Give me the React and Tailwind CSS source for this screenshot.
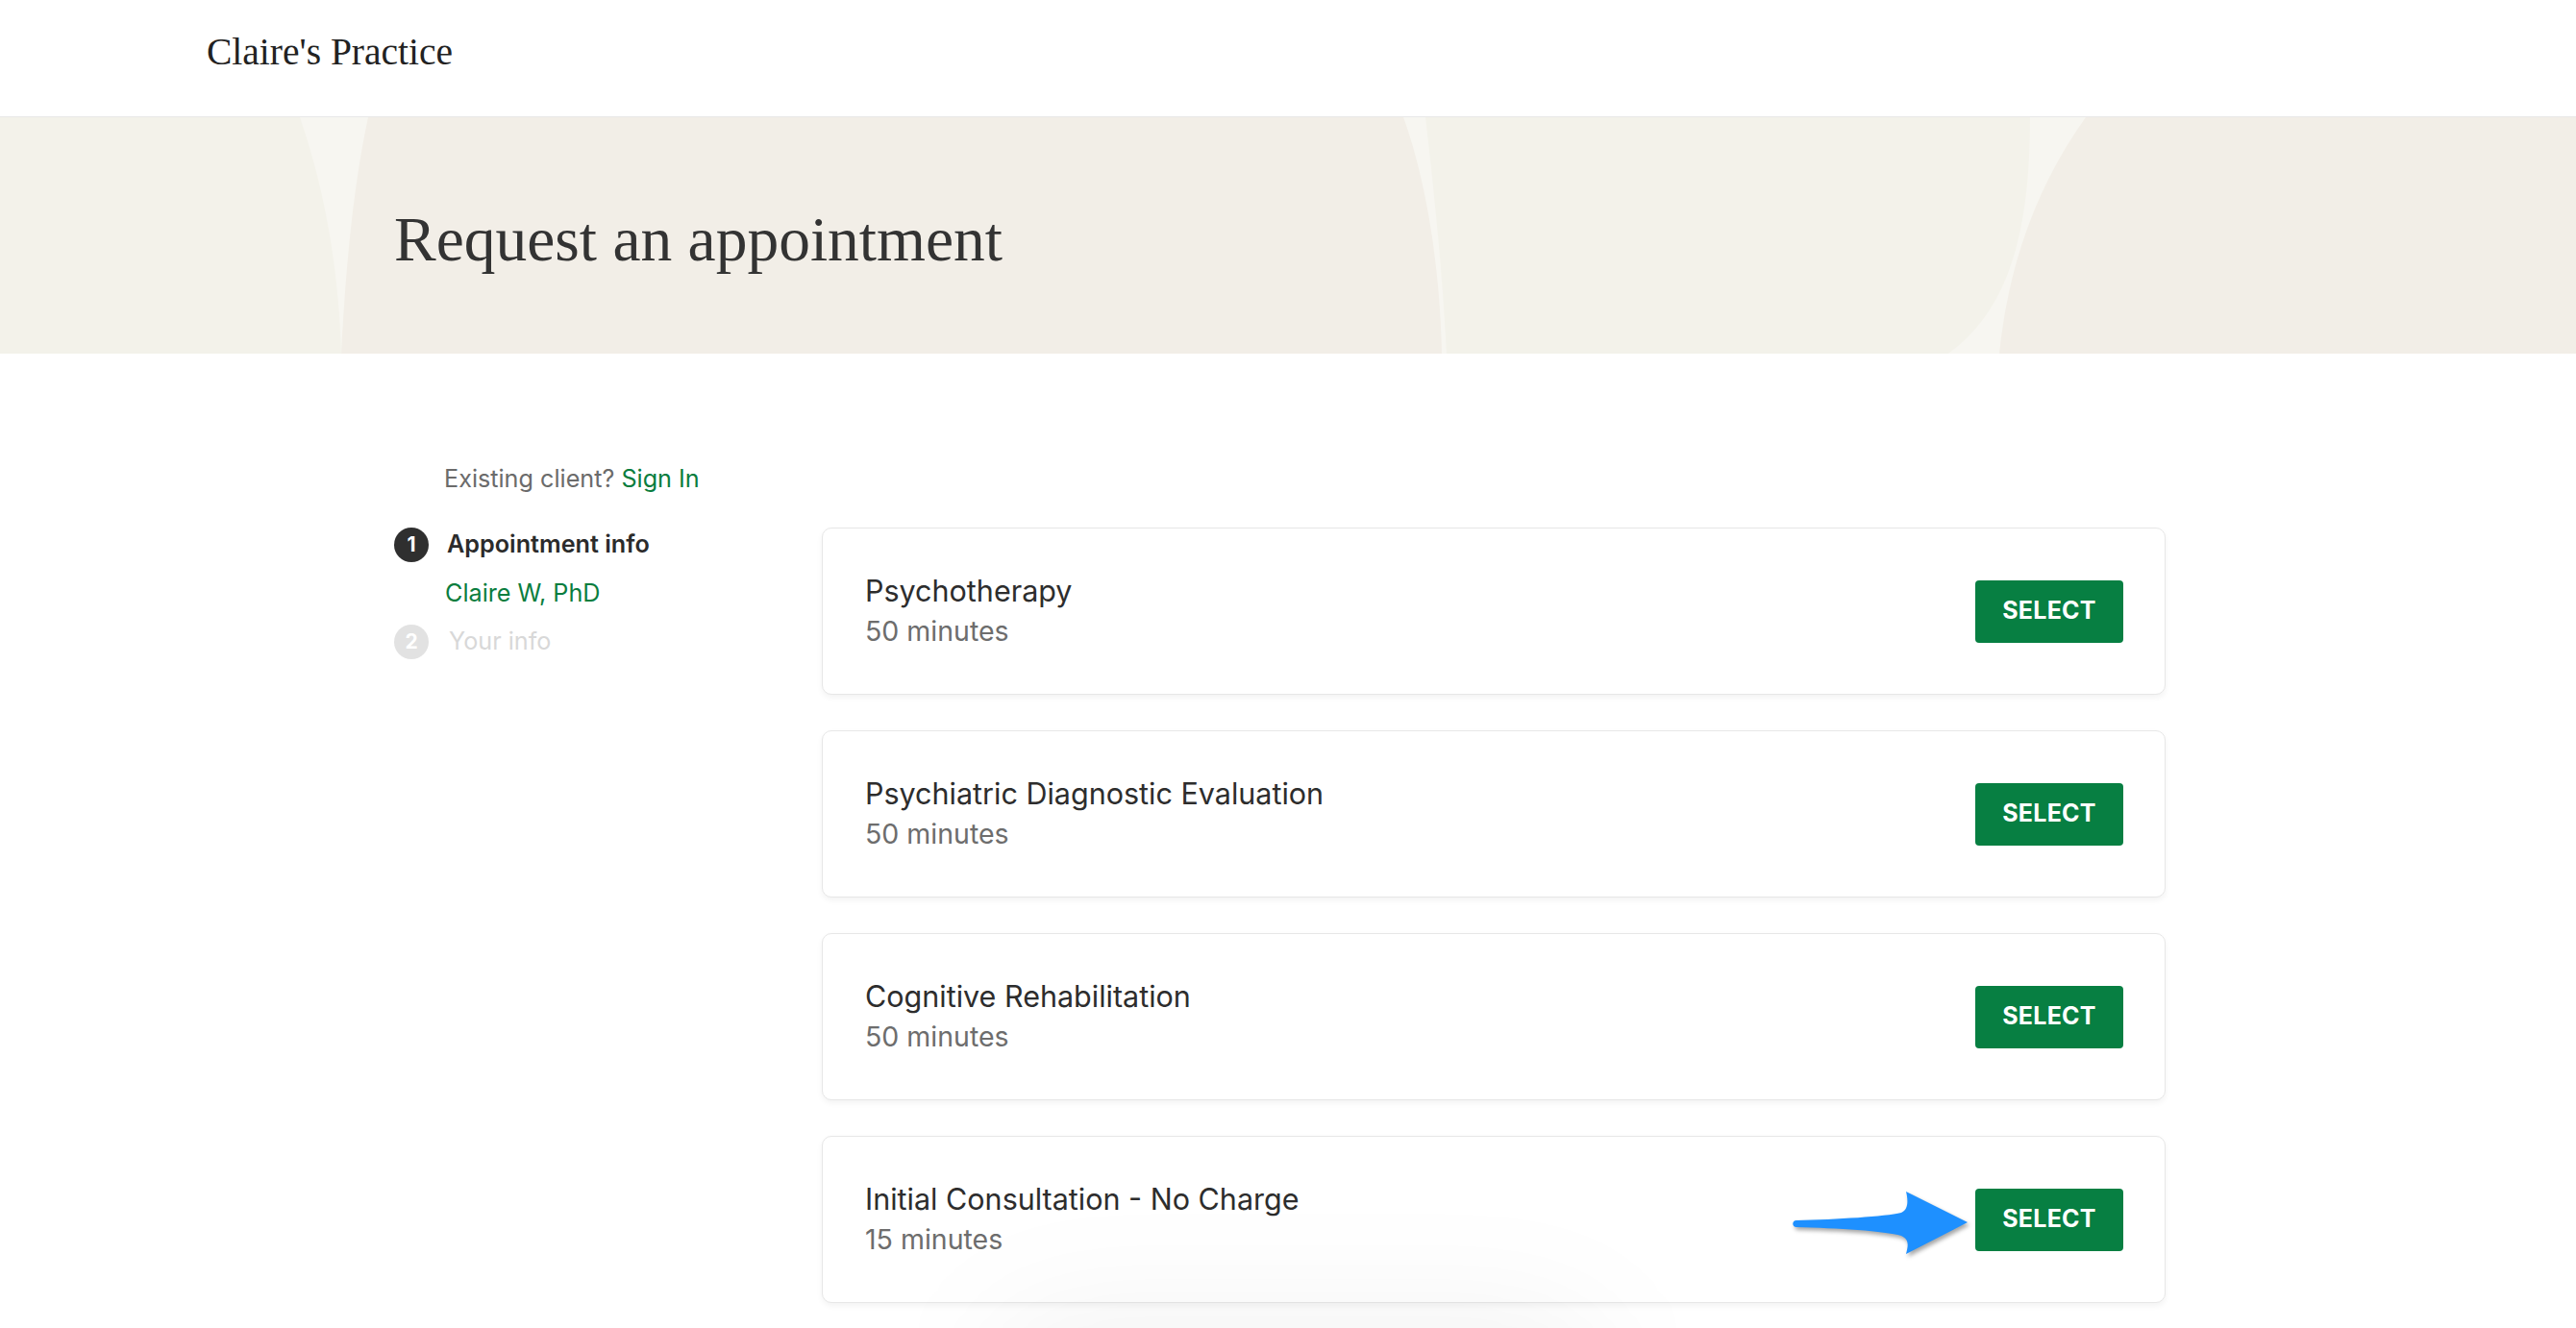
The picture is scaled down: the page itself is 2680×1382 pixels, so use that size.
import React from 'react';

const services = [
    { name: 'Psychotherapy', duration: '50 minutes' },
    { name: 'Psychiatric Diagnostic Evaluation', duration: '50 minutes' },
    { name: 'Cognitive Rehabilitation', duration: '50 minutes' },
    { name: 'Initial Consultation - No Charge', duration: '15 minutes', pointer: true },
];

function BannerShapes() {
    return (
        <svg className="absolute inset-0 h-full w-full" viewBox="0 0 2680 246" preserveAspectRatio="none">
            <rect width="2680" height="246" fill="#F7F6F1" />
            <path d="M0 0 L312 0 C336 70 352 150 355 246 L0 246 Z" fill="#F3F2EA" />
            <path d="M383 0 L1460 0 C1482 60 1498 150 1500 246 L355 246 C360 150 368 70 383 0 Z" fill="#F2EEE7" />
            <path d="M1483 0 L2112 0 C2112 120 2090 200 2027 246 L1505 246 C1500 150 1490 60 1483 0 Z" fill="#F3F2EA" />
            <path d="M2170 0 L2680 0 L2680 246 L2080 246 C2090 150 2120 70 2170 0 Z" fill="#F2EEE7" />
        </svg>
    );
}

function Arrow() {
    return (
        <svg
            className="absolute left-[1005px] top-[51px] h-[80px] w-[192px] drop-shadow-[2px_3px_2px_rgba(0,0,0,0.35)]"
            viewBox="0 0 192 80"
        >
            <path
                d="M8 36 C50 35 100 32 117 28 C125 25 124 14 122 6 L186 38 L122 71 C124 63 126 56 117 52 C100 47 50 44 8 43 C3 43 3 36 8 36 Z"
                fill="#1E90FF"
            />
        </svg>
    );
}

function ServiceCard({ name, duration, pointer }) {
    return (
        <div className="relative flex h-[174px] items-center justify-between rounded-[10px] border border-[#e7e7e7] bg-white pl-[44px] pr-[43px] shadow-[0_3px_6px_rgba(0,0,0,0.05)]">
            <div>
                <div className="text-[30.5px] leading-[42px] text-[#2d2d2d]">{name}</div>
                <div className="text-[28.5px] leading-[42px] text-[#6d6d6d]">{duration}</div>
            </div>
            {pointer && <Arrow />}
            <button className="flex h-[65px] w-[154px] items-center justify-center rounded-[4px] bg-[#077f42] text-[25px] font-bold tracking-[0.01em] text-white">
                SELECT
            </button>
        </div>
    );
}

export default function App() {
    return (
        <div className="relative h-[1382px] overflow-hidden bg-white font-['Inter',sans-serif]">
            <header className="h-[122px] border-b border-[#e8e8e8] pl-[215px] pt-[35px]">
                <span className="font-['Liberation_Serif',serif] text-[39.5px] leading-none text-[#222]">Claire's Practice</span>
            </header>

            <section className="relative h-[246px]">
                <BannerShapes />
                <h1 className="relative pl-[410px] pt-[95px] font-['Liberation_Serif',serif] text-[65.5px] leading-none text-[#333]">
                    Request an appointment
                </h1>
            </section>

            <div className="flex pl-[410px] pt-[110px]">
                <div className="w-[445px]">
                    <p className="pl-[52px] text-[25.2px] leading-[40px] text-[#6b6b6b]">
                        Existing client? <span className="text-[#0a7d3e]">Sign In</span>
                    </p>
                    <div className="mt-[29px] flex h-[40px] items-center gap-[19px]">
                        <span className="flex h-[36px] w-[36px] items-center justify-center rounded-full bg-[#2f2f2f] text-[21px] font-bold text-white">1</span>
                        <span className="text-[25.2px] font-semibold text-[#2b2b2b]">Appointment info</span>
                    </div>
                    <div className="mt-[10px] pl-[53px] text-[25.2px] leading-[40px] text-[#0a7d3e]">Claire W, PhD</div>
                    <div className="mt-[11px] flex h-[40px] items-center gap-[21px]">
                        <span className="flex h-[36px] w-[36px] items-center justify-center rounded-full bg-[#e2e2e2] text-[21px] font-bold text-white">2</span>
                        <span className="text-[25.2px] text-[#d8d8d8]">Your info</span>
                    </div>
                </div>

                <div className="mt-[71px] flex w-[1398px] flex-col gap-[37px]">
                    {services.map((s) => (
                        <ServiceCard key={s.name} {...s} />
                    ))}
                </div>
            </div>

            <div className="pointer-events-none absolute left-[1030px] top-[1370px] h-[160px] w-[640px] rounded-full bg-black/[0.05] blur-3xl" />
        </div>
    );
}
